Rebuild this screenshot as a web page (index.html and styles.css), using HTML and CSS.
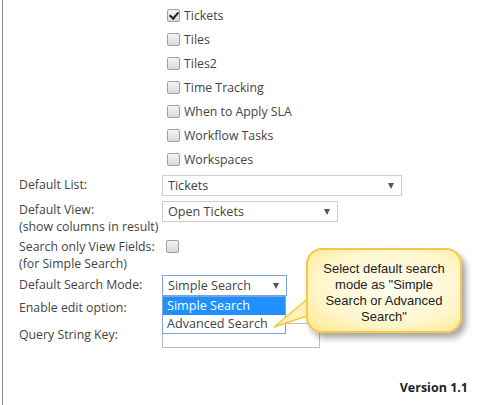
FILE: index.html
```html
<!DOCTYPE html>
<html>
<head>
<meta charset="utf-8">
<link rel="stylesheet" href="styles.css">
</head>
<body>
<div class="frame">
  <ul class="lists">
    <li><span class="cb checked"></span>Tickets</li>
    <li><span class="cb"></span>Tiles</li>
    <li><span class="cb"></span>Tiles2</li>
    <li><span class="cb"></span>Time Tracking</li>
    <li><span class="cb"></span>When to Apply SLA</li>
    <li><span class="cb"></span>Workflow Tasks</li>
    <li><span class="cb"></span>Workspaces</li>
  </ul>

  <div class="row row-list">
    <div class="label">Default List:</div>
    <div class="select w-list"><span>Tickets</span><i class="arrow"></i></div>
  </div>

  <div class="row row-view">
    <div class="label">Default View:<br>(show columns in result)</div>
    <div class="select w-view"><span>Open Tickets</span><i class="arrow"></i></div>
  </div>

  <div class="row row-fields">
    <div class="label">Search only View Fields:<br>(for Simple Search)</div>
    <span class="cb cb-field"></span>
  </div>

  <div class="row row-mode">
    <div class="label">Default Search Mode:</div>
    <div class="select w-mode focused"><span>Simple Search</span><i class="arrow"></i>
      <ul class="options">
        <li class="selected">Simple Search</li>
        <li>Advanced Search</li>
      </ul>
    </div>
  </div>

  <div class="row row-edit">
    <div class="label">Enable edit option:</div>
  </div>

  <div class="row row-key">
    <div class="label">Query String Key:</div>
    <div class="input"></div>
  </div>

  <div class="version">Version 1.1</div>

  <div class="callout">
    <svg class="tail" width="50" height="40" viewBox="0 0 50 40">
      <polygon points="38,4 40,22 1,35" fill="#fff3b8" stroke="#f7c843" stroke-width="1.5" stroke-linejoin="round"/>
    </svg>
    <div class="bubble">Select default search mode as "Simple Search or Advanced Search"</div>
  </div>
</div>
</body>
</html>
```

FILE: styles.css
```css
* { box-sizing: border-box; }
html, body { margin: 0; padding: 0; background: #fff; }
body {
  width: 480px;
  height: 405px;
  overflow: hidden;
  font-family: "Open Sans", "Noto Sans", sans-serif;
  font-size: 12.3px;
  color: #444;
}
.frame {
  position: relative;
  height: 405px;
  margin-left: 2px;
  border-left: 1px solid #8a8a8a;
  padding-left: 16px;
}
.lists {
  list-style: none;
  margin: 0;
  padding: 3px 0 0 148px;
}
.lists li {
  height: 24px;
  display: flex;
  align-items: center;
  gap: 4px;
}
.cb {
  display: inline-block;
  width: 13px;
  height: 13px;
  border: 1px solid #a0a0a0;
  border-radius: 2px;
  background: linear-gradient(#f4f4f4, #d9d9d9);
  position: relative;
  flex: none;
}
.cb.checked::after {
  content: "";
  position: absolute;
  left: 3px;
  top: 0px;
  width: 4px;
  height: 7px;
  border-right: 2px solid #222;
  border-bottom: 2px solid #222;
  transform: rotate(40deg);
}
.row {
  display: flex;
  align-items: flex-start;
  line-height: 17px;
}
.label {
  width: 143px;
  flex: none;
}
.row-list { margin-top: 4px; }
.row-list .label { padding-top: 1px; }
.row-view { margin-top: 5px; }
.row-fields { margin-top: 2px; }
.row-fields .label { padding-top: 1px; }
.cb-field { margin-top: 3px; margin-left: 4px; }
.row-mode { margin-top: 3px; }
.row-mode .label { padding-top: 1px; }
.row-edit { margin-top: 3px; }
.row-key { margin-top: 7px; }
.row-key .label { padding-top: 3px; }

.select {
  position: relative;
  height: 21px;
  border: 1px solid #cfcfcf;
  background: #fff;
  padding: 0 0 0 5px;
  line-height: 19px;
  font-size: 12.6px;
}
.select.focused { border-color: #7ea3d6; }
.arrow {
  position: absolute;
  right: 7px;
  top: 7px;
  width: 0;
  height: 0;
  border-left: 3.5px solid transparent;
  border-right: 3.5px solid transparent;
  border-top: 6px solid #555;
}
.w-list { width: 240px; }
.w-view { width: 176px; }
.w-mode { width: 125px; }
.options {
  position: absolute;
  left: -1px;
  top: 20px;
  width: 124px;
  margin: 0;
  padding: 0;
  list-style: none;
  border: 1px solid #7ea3d6;
  background: #fff;
  z-index: 2;
}
.options li {
  height: 18px;
  line-height: 18px;
  padding-left: 4px;
}
.options li.selected {
  background: #1e90ff;
  color: #fff;
}
.input {
  width: 158px;
  height: 25px;
  border: 1px solid #bdbdbd;
}
.version {
  position: absolute;
  right: 12px;
  top: 379px;
  font-weight: bold;
  font-size: 12.5px;
  color: #222;
}
.callout {
  position: absolute;
  left: 270px;
  top: 248px;
  z-index: 3;
}
.tail {
  position: absolute;
  left: 0px;
  top: 44px;
}
.bubble {
  position: relative;
  margin-left: 33px;
  width: 156px;
  height: 85px;
  border-radius: 16px;
  border: 2px solid #f7c843;
  background: radial-gradient(ellipse at 55% 45%, #fffdf2 0%, #fff6cc 60%, #ffe88a 100%);
  box-shadow: 4px 5px 6px rgba(0,0,0,0.35);
  font-family: "Liberation Sans", Arial, sans-serif;
  font-size: 13px;
  line-height: 16px;
  color: #222;
  text-align: center;
  padding: 11px 10px 0;
}
```
